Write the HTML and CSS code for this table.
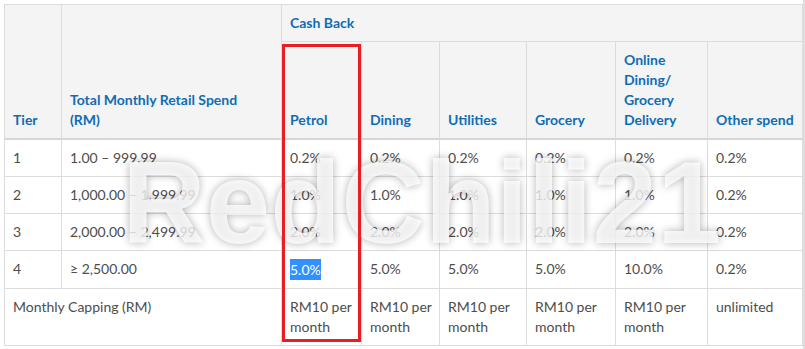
FILE: index.html
```html
<!DOCTYPE html>
<html>
<head>
<meta charset="utf-8">
<link rel="stylesheet" href="styles.css">
</head>
<body>
<div class="page">
  <div class="wrap">
    <table class="rates">
      <colgroup>
        <col class="c-tier"><col class="c-spend"><col class="c-petrol"><col class="c-dining"><col class="c-util"><col class="c-groc"><col class="c-online"><col class="c-other">
      </colgroup>
      <thead>
        <tr>
          <th rowspan="2">Tier</th>
          <th rowspan="2"><span class="narrow">Total Monthly Retail Spend (RM)</span></th>
          <th colspan="6" class="group">Cash Back</th>
        </tr>
        <tr class="sub">
          <th>Petrol</th>
          <th>Dining</th>
          <th>Utilities</th>
          <th>Grocery</th>
          <th>Online Dining/ Grocery Delivery</th>
          <th>Other spend</th>
        </tr>
      </thead>
      <tbody>
        <tr><td>1</td><td>1.00 – 999.99</td><td>0.2%</td><td>0.2%</td><td>0.2%</td><td>0.2%</td><td>0.2%</td><td>0.2%</td></tr>
        <tr><td>2</td><td>1,000.00 – 1,999.99</td><td>1.0%</td><td>1.0%</td><td>1.0%</td><td>1.0%</td><td>1.0%</td><td>0.2%</td></tr>
        <tr><td>3</td><td>2,000.00 – 2,499.99</td><td>2.0%</td><td>2.0%</td><td>2.0%</td><td>2.0%</td><td>2.0%</td><td>0.2%</td></tr>
        <tr><td>4</td><td>≥ 2,500.00</td><td><span class="sel">5.0%</span></td><td>5.0%</td><td>5.0%</td><td>5.0%</td><td>10.0%</td><td>0.2%</td></tr>
        <tr><td colspan="2">Monthly Capping (RM)</td><td>RM10 per month</td><td>RM10 per month</td><td>RM10 per month</td><td>RM10 per month</td><td>RM10 per month</td><td>unlimited</td></tr>
      </tbody>
    </table>
    <div class="mark">RedChili21</div>
    <div class="redbox"></div>
  </div>
  <div class="edge"></div>
</div>
</body>
</html>
```
FILE: styles.css
```css
html, body {
  margin: 0;
  padding: 0;
  background: #fff;
}
.page {
  display: flex;
  min-height: 349px;
  font-family: Lato, "Open Sans", sans-serif;
  font-size: 14px;
  line-height: 20px;
  color: #4d4d4d;
}
.wrap {
  position: relative;
  margin-left: 4px;
  padding-top: 4px;
  width: 798px;
}
.edge {
  width: 2px;
  margin-left: 1px;
  background: #dedede;
}
.rates {
  border-collapse: collapse;
  table-layout: fixed;
  width: 798px;
  border: 1px solid #dcdcdc;
}
.c-tier { width: 57px; }
.c-spend { width: 220px; }
.c-petrol { width: 80px; }
.c-dining { width: 78px; }
.c-util { width: 87px; }
.c-groc { width: 89px; }
.c-online { width: 92px; }
.c-other { width: 95px; }
.rates th, .rates td {
  border: 1px solid #dcdcdc;
  padding: 8px 2px 8px 8px;
  text-align: left;
  vertical-align: top;
}
.rates th {
  background: #f4f4f4;
  color: #0f6cb6;
  font-weight: 700;
  vertical-align: bottom;
}
.narrow {
  display: inline-block;
  max-width: 175px;
}
.rates thead tr.sub th,
.rates thead th[rowspan] {
  border-bottom: 2px solid #d6d6d6;
}
.rates td {
  background: #fff;
}
.sel {
  background: #3390ff;
  color: #fff;
  display: inline-block;
  line-height: 21px;
}
.mark {
  position: absolute;
  left: 118px;
  top: 145px;
  font-family: "Liberation Sans", Arial, sans-serif;
  font-weight: 700;
  font-size: 116px;
  line-height: 116px;
  color: rgba(255, 255, 255, 0.78);
  text-shadow: 0 0 9px rgba(0, 0, 0, 0.3);
  white-space: nowrap;
  pointer-events: none;
}
.redbox {
  position: absolute;
  left: 278px;
  top: 44px;
  width: 73px;
  height: 292px;
  border: 3px solid #ea1c24;
  pointer-events: none;
}
```
